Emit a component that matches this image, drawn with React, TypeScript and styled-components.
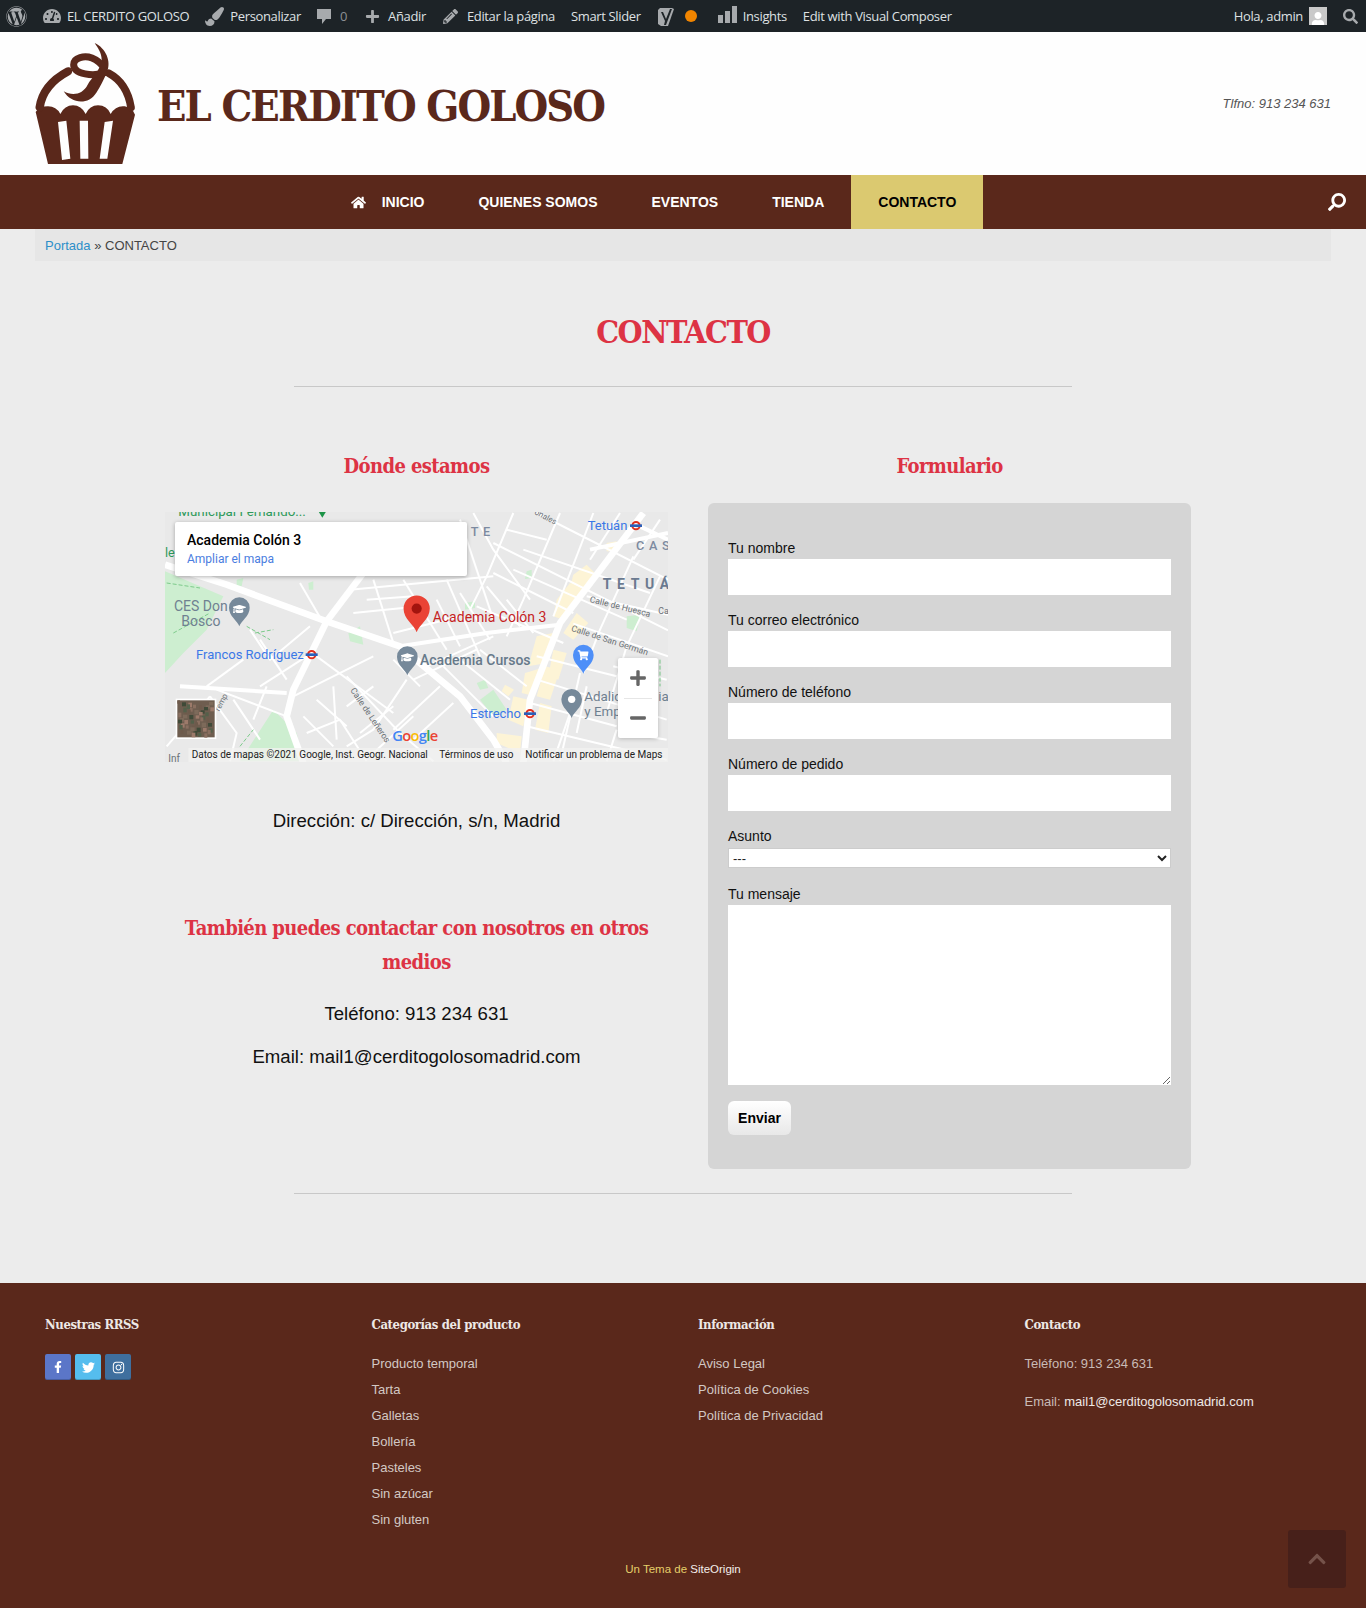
import type { ReactNode } from "react";
import styled, { createGlobalStyle } from "styled-components";
import {
  FaWordpress,
  FaTachometerAlt,
  FaPaintBrush,
  FaPlus,
  FaMinus,
  FaPencilAlt,
  FaSearch,
  FaHome,
  FaFacebookF,
  FaTwitter,
  FaInstagram,
  FaChevronUp,
  FaUser,
  FaShoppingCart,
  FaGraduationCap,
} from "react-icons/fa";

const SERIF = `"DejaVu Serif Condensed", "DejaVu Serif", serif`;
const SANS = `"Liberation Sans", Arial, sans-serif`;
const BROWN = "#5a281b";
const RED = "#dd3344";

const GlobalStyle = createGlobalStyle`
  html, body {
    margin: 0;
    padding: 0;
    background: #ececec;
    font-family: ${SANS};
  }
  * { box-sizing: border-box; }
`;

const Page = styled.div`
  position: relative;
  width: 1366px;
  height: 1608px;
  overflow: hidden;
`;

/* admin bar */
const AdminBar = styled.div`
  display: flex;
  align-items: center;
  justify-content: space-between;
  height: 32px;
  padding: 0 8px 0 6px;
  background: #1d2327;
  color: #dfe1e3;
  font-family: "Open Sans", sans-serif;
  font-size: 13px;
  letter-spacing: -0.35px;
`;
const AdminGroup = styled.div`
  display: flex;
  align-items: center;
  gap: 16px;
`;
const AdminItem = styled.span<{ $gap?: number; $left?: number }>`
  display: flex;
  align-items: center;
  gap: ${(p) => p.$gap ?? 6}px;
  margin-left: ${(p) => p.$left ?? 0}px;
  white-space: nowrap;
  svg {
    color: #a7aaad;
    display: block;
  }
`;
const CommentCount = styled.span`
  color: #8c8f94;
  margin-left: 2px;
`;
const StatusDot = styled.span`
  width: 12px;
  height: 12px;
  margin-left: -8px;
  border-radius: 50%;
  background: #f18500;
`;
const InsightBars = styled.span`
  display: flex;
  align-items: flex-end;
  gap: 2px;
  height: 17px;
  margin: 0 0 4px 5px;
`;
const Bar = styled.i<{ $h: number }>`
  display: block;
  width: 5px;
  height: ${(p) => p.$h}px;
  background: #a7aaad;
`;
const Avatar = styled.span`
  display: flex;
  align-items: flex-end;
  justify-content: center;
  width: 18px;
  height: 18px;
  background: #c9c9c9;
  overflow: hidden;
  svg {
    color: #fff;
    margin-bottom: -1px;
  }
`;

/* header */
const Header = styled.header`
  display: flex;
  align-items: center;
  justify-content: space-between;
  height: 143px;
  padding: 0 35px 2px;
  background: #fefefe;
`;
const Brand = styled.div`
  display: flex;
  align-items: center;
  gap: 21px;
`;
const LogoSvg = styled.svg`
  display: block;
  fill: ${BROWN};
`;
const BrandName = styled.div`
  margin-top: 6px;
  font-family: ${SERIF};
  font-size: 43px;
  font-weight: 700;
  color: ${BROWN};
  letter-spacing: -1.9px;
  white-space: nowrap;
`;
const Phone = styled.div`
  margin-top: 2px;
  font-size: 13px;
  font-style: italic;
  color: #555;
`;

/* nav */
const NavBar = styled.nav`
  display: flex;
  height: 54px;
  background: ${BROWN};
`;
const Menu = styled.ul`
  flex: 1;
  display: flex;
  justify-content: center;
  list-style: none;
  margin: 0;
  padding: 0;
`;
const MenuItem = styled.li<{ $active?: boolean }>`
  display: flex;
  align-items: center;
  gap: 16px;
  padding: 0 27px;
  font-size: 14px;
  font-weight: 700;
  color: ${(p) => (p.$active ? "#000" : "#fff")};
  background: ${(p) => (p.$active ? "#dbc970" : "transparent")};
`;
const NavSearch = styled.div`
  display: flex;
  align-items: center;
  width: 59px;
  padding-left: 21px;
  color: #fff;
  svg {
    transform: scaleX(-1);
  }
`;

/* main */
const Crumbs = styled.div`
  height: 32px;
  margin: 0 35px;
  padding-left: 10px;
  background: #e6e6e6;
  color: #444;
  font-size: 13px;
  line-height: 33px;
  a {
    color: #2d8fc9;
    text-decoration: none;
  }
`;
const PageTitle = styled.h1`
  margin: 51px 0 34px;
  font-family: ${SERIF};
  font-size: 32px;
  line-height: 40px;
  font-weight: 700;
  color: ${RED};
  text-align: center;
  letter-spacing: -1.5px;
`;
const Rule = styled.hr`
  width: 778px;
  height: 1px;
  margin: 0 auto;
  border: 0;
  background: #c8c8c8;
`;
const Columns = styled.div`
  display: grid;
  grid-template-columns: 503px 483px;
  column-gap: 40px;
  width: 1026px;
  margin: 61px 0 24px 165px;
`;
const SectionTitle = styled.h2<{ $top?: number }>`
  margin: ${(p) => p.$top ?? 0}px 0 -1px;
  padding-top: 1px;
  font-family: ${SERIF};
  font-size: 20px;
  line-height: 34px;
  font-weight: 700;
  color: ${RED};
  text-align: center;
  letter-spacing: -0.6px;
`;
const CenterText = styled.p<{ $top: number }>`
  margin: ${(p) => p.$top}px 0 0;
  font-size: 18.62px;
  line-height: 26px;
  color: #111;
  text-align: center;
`;

/* map */
const MapBox = styled.div`
  position: relative;
  width: 503px;
  height: 250px;
  margin-top: 30px;
  overflow: hidden;
  background: #e9e9e9;
  svg.base {
    display: block;
  }
`;
const InfoCard = styled.div`
  position: absolute;
  left: 10px;
  top: 10px;
  width: 292px;
  height: 54px;
  padding: 9px 12px;
  background: #fff;
  border-radius: 2px;
  box-shadow: 0 1px 4px rgba(0, 0, 0, 0.3);
  font-family: Roboto, sans-serif;
`;
const InfoName = styled.div`
  font-size: 14px;
  line-height: 18px;
  font-weight: 500;
  color: #000;
`;
const InfoLink = styled.div`
  margin-top: 1px;
  font-size: 12px;
  line-height: 19px;
  color: #4a7de0;
`;
const ZoomBox = styled.div`
  position: absolute;
  right: 10px;
  top: 146px;
  display: flex;
  flex-direction: column;
  width: 40px;
  height: 80px;
  background: #fff;
  border-radius: 2px;
  box-shadow: 0 1px 4px rgba(0, 0, 0, 0.2);
`;
const ZoomButton = styled.div`
  flex: 1;
  display: flex;
  align-items: center;
  justify-content: center;
  color: #666;
  & + & {
    position: relative;
  }
  & + &::before {
    content: "";
    position: absolute;
    top: 0;
    left: 6px;
    right: 6px;
    height: 1px;
    background: #e6e6e6;
  }
`;

/* form */
const FormPanel = styled.form`
  margin-top: 21px;
  padding: 35px 20px 34px;
  background: #d5d5d5;
  border-radius: 6px;
`;
const Label = styled.label`
  display: block;
  height: 21px;
  font-size: 14px;
  line-height: 20px;
  color: #111;
`;
const TextField = styled.input`
  display: block;
  width: 100%;
  height: 36px;
  margin-bottom: 15px;
  border: 0;
  background: #fff;
`;
const SelectField = styled.select`
  display: block;
  width: 100%;
  height: 20px;
  margin: 1px 0 16px;
  padding: 0;
  border: 1px solid #ccc;
  background: #fff;
  font-family: ${SANS};
  font-size: 13px;
  color: #222;
`;
const MessageField = styled.textarea`
  display: block;
  width: 100%;
  height: 180px;
  border: 0;
  background: #fff;
`;
const SendButton = styled.button`
  display: block;
  width: 63px;
  height: 34px;
  margin-top: 16px;
  padding: 0;
  border: 0;
  border-radius: 6px;
  background: linear-gradient(#ffffff, #e8e8e8);
  font-family: ${SANS};
  font-size: 14px;
  font-weight: 700;
  color: #000;
`;

/* footer */
const Footer = styled.footer`
  height: 325px;
  margin-top: 89px;
  padding: 32px 0 0 45px;
  background: ${BROWN};
  font-size: 13px;
  color: #d3c8c4;
`;
const FooterGrid = styled.div`
  display: grid;
  grid-template-columns: repeat(4, 326.5px);
  height: 244px;
`;
const FooterTitle = styled.h3`
  margin: 0 0 16px;
  font-family: ${SERIF};
  font-size: 13px;
  line-height: 20px;
  font-weight: 700;
  color: #eee8e5;
  letter-spacing: -0.4px;
`;
const FooterLinks = styled.ul`
  margin: 0;
  padding: 0;
  list-style: none;
`;
const FooterLink = styled.li`
  height: 26px;
  line-height: 26px;
`;
const ContactLine = styled.p`
  margin: 0 0 12px;
  line-height: 26px;
  color: #c9bbb6;
  strong {
    font-weight: 400;
    color: #efe9e6;
  }
`;
const Socials = styled.div`
  display: flex;
  gap: 4px;
  margin-top: 19px;
`;
const SocialIcon = styled.span<{ $bg: string }>`
  display: flex;
  align-items: center;
  justify-content: center;
  width: 26px;
  height: 26px;
  border-radius: 2px;
  background: ${(p) => p.$bg};
  box-shadow: inset 0 -1px 0 rgba(0, 0, 0, 0.2);
  color: #fff;
`;
const Credit = styled.div`
  margin-left: -45px;
  font-size: 11.5px;
  line-height: 20px;
  text-align: center;
  color: #e5cf6a;
  span {
    color: #f3eeea;
  }
`;
const ToTop = styled.div`
  position: absolute;
  left: 1288px;
  top: 1530px;
  display: flex;
  align-items: center;
  justify-content: center;
  width: 58px;
  height: 58px;
  border-radius: 3px;
  background: #47201a;
  color: #75524a;
`;

const THIN = [
  "M1130 40L1524 240", "M1000 130L1524 392", "M1240 372L1524 470", "M1280 290L1524 345",
  "M940 40L1000 150L1110 300", "M1300 40L1180 350", "M1200 40L1090 300L1040 410", "M1060 40L980 230L930 330",
  "M1420 170L1320 390L1270 520", "M1500 230L1400 440L1340 640", "M1000 220L1240 340", "M950 320L1210 430",
  "M900 60L1000 360", "M1040 90L1160 120", "M860 240L960 470", "M730 240L860 450", "M640 240L700 430",
  "M570 270L1000 230", "M420 250L490 370", "M700 400L900 350", "M800 500L1000 410", "M760 540L950 450",
  "M740 540L640 690L560 740", "M560 530L720 700L820 785", "M470 470L700 640", "M400 590L500 540L640 470",
  "M880 610L760 720", "M840 560L700 690", "M1130 540L1520 660", "M1110 610L1370 680", "M1100 680L1520 780",
  "M1130 470L1370 530", "M1260 520L1200 785", "M1370 690L1340 785", "M1230 640L1180 785",
  "M170 570L380 650", "M150 590L230 700L210 785", "M20 740L150 590", "M300 560L440 470", "M270 390L330 480L450 380",
  "M440 700L540 660L620 785", "M520 560L530 720",
  "M1380 40L1290 180", "M1500 60L1420 180", "M1090 150L1470 280", "M1060 210L1400 360",
  "M620 300L760 290", "M580 340L780 320", "M830 300L900 440", "M900 280L990 420", "M980 260L1080 380", "M1040 300L1120 400",
  "M780 560L700 480", "M850 500L1000 650", "M900 480L1050 600", "M960 450L1100 560",
  "M430 650L520 740", "M470 600L560 680", "M560 620L640 560", "M600 700L700 620", "M640 760L760 650",
  "M250 480L140 560", "M300 420L380 540", "M220 600L300 720", "M320 560L280 660",
  "M1360 500L1520 540", "M1280 560L1250 700", "M1400 700L1520 720",
];
const MEDIUM = ["M720 440L980 400L1200 375", "M60 560L380 580", "M1290 150L1524 100", "M1440 80L1524 120"];
const WIDE = [
  "M15 195L200 255L500 365L720 440L900 590L1000 720L1040 790",
  "M610 220L500 365L400 570L380 650L430 790",
  "M1450 40L1200 370L1110 600L1090 790",
];
const YELLOW = [
  "M1240 225L1280 195L1310 225L1260 290L1225 280Z", "M1190 300L1230 250L1260 270L1210 360L1180 350Z",
  "M1130 410L1180 400L1160 490L1105 500Z", "M1095 520L1145 505L1125 590L1085 580Z", "M1180 450L1220 460L1195 540L1165 530Z",
  "M1155 500L1200 510L1170 600L1130 590Z", "M1140 610L1175 620L1165 700L1125 690Z", "M1060 590L1105 600L1090 680L1045 660Z",
  "M1010 700L1085 710L1080 760L1010 730Z", "M1210 400L1250 340L1285 370L1240 420Z", "M1340 130L1370 125L1360 155L1340 155Z",
  "M1035 555L1062 570L1045 590L1025 575Z",
];
const GREEN = [
  "M15 215L190 290L140 390L70 460L15 520Z", "M240 785L340 630L410 700L430 785Z", "M565 400L600 380L610 435L570 425Z",
  "M960 600L1000 570L1040 630L1000 650Z", "M950 550L975 540L985 565L960 570Z", "M915 310L945 305L945 325L915 330Z",
  "M230 240L250 235L245 260L230 258Z", "M445 250L460 245L460 270L447 270Z", "M1400 350L1440 345L1430 395L1400 385Z",
  "M1100 215L1115 210L1115 235L1095 238Z",
];
const SATELLITE = ["#6e5a4b", "#8a6f60", "#54604a", "#9c7a6a", "#3f4a38", "#7d6a5a"];
const CATEGORIES = ["Producto temporal", "Tarta", "Galletas", "Bollería", "Pasteles", "Sin azúcar", "Sin gluten"];

const MetroIcon = ({ x, y }: { x: number; y: number }) => (
  <g transform={`translate(${x} ${y})`}>
    <circle r="11" fill="none" stroke="#e0301e" strokeWidth="6" />
    <rect x="-18" y="-4" width="36" height="8" fill="#2b5fb8" />
  </g>
);

const DropPin = ({
  x,
  y,
  color,
  scale = 1,
  children,
}: {
  x: number;
  y: number;
  color: string;
  scale?: number;
  children?: ReactNode;
}) => (
  <g transform={`translate(${x} ${y}) scale(${scale})`}>
    <path d="M0 48C-6 30-31 18-31 -8A31 31 0 1 1 31 -8C31 18 6 30 0 48Z" fill={color} />
    {children}
  </g>
);

function MapDrawing() {
  const labelFont = { fontFamily: "Roboto, sans-serif" };
  return (
    <svg className="base" width="503" height="250" viewBox="15 37 1509 750">
      <rect x="15" y="37" width="1509" height="750" fill="#e9e9e9" />
      {GREEN.map((d) => (
        <path key={d} d={d} fill="#cdeed0" />
      ))}
      {YELLOW.map((d) => (
        <path key={d} d={d} fill="#fdf4d6" />
      ))}
      <g stroke="#fff" fill="none" strokeLinejoin="round">
        {THIN.map((d) => (
          <path key={d} d={d} strokeWidth="6" />
        ))}
        {MEDIUM.map((d) => (
          <path key={d} d={d} strokeWidth="12" />
        ))}
        {WIDE.map((d) => (
          <path key={d} d={d} strokeWidth="20" />
        ))}
      </g>
      <path
        d="M20 250L120 265M40 400L150 340M260 380L330 420M285 400L340 390M240 740L280 690M1500 480V560"
        stroke="#7dcb8b"
        strokeWidth="3"
        strokeDasharray="12 6"
        fill="none"
      />
      <g {...labelFont}>
        <text x="55" y="48" fontSize="40" fill="#2e9a5a">Municipal Fernando...</text>
        <path d="M476 36h22l-11 18z" fill="#1e9448" />
        <text x="15" y="172" fontSize="38" fill="#2e9a5a">le</text>
        <text x="932" y="110" fontSize="38" fontWeight="500" letterSpacing="14" fill="#7c8aa0">TE</text>
        <text x="1283" y="92" fontSize="39" fill="#3b78e7">Tetuán</text>
        <MetroIcon x={1428} y={78} />
        <text x="1428" y="152" fontSize="38" fontWeight="500" letterSpacing="14" fill="#7c8aa0">CAS</text>
        <text x="1328" y="268" fontSize="42" fontWeight="700" letterSpacing="17" fill="#6b7a90">TETUÁN</text>
        <text x="42" y="335" fontSize="42" fill="#6f8090">CES Don</text>
        <text x="64" y="378" fontSize="42" fill="#6f8090">Bosco</text>
        <DropPin x={238} y={332} color="#76899a">
          <foreignObject x="-20" y="-24" width="40" height="40">
            <FaGraduationCap size={40} color="#fff" />
          </foreignObject>
        </DropPin>
        <text x="108" y="478" fontSize="39" fill="#3b78e7">Francos Rodríguez</text>
        <MetroIcon x={455} y={465} />
        <DropPin x={770} y={337} scale={1.27} color="#ea4335">
          <circle cy="-8" r="12" fill="#a3140e" />
        </DropPin>
        <text x="818" y="368" fontSize="42" fill="#c5221f">Academia Colón 3</text>
        <DropPin x={742} y={479} color="#76899a">
          <foreignObject x="-20" y="-26" width="40" height="40">
            <FaGraduationCap size={40} color="#fff" />
          </foreignObject>
        </DropPin>
        <text x="780" y="497" fontSize="42" fontWeight="500" fill="#66798a">Academia Cursos</text>
        <DropPin x={1270} y={474} color="#4e8ff8">
          <foreignObject x="-18" y="-24" width="36" height="36">
            <FaShoppingCart size={34} color="#fff" />
          </foreignObject>
        </DropPin>
        <DropPin x={1235} y={607} color="#76899a">
          <circle cy="-8" r="11" fill="#fff" />
        </DropPin>
        <text x="1273" y="605" fontSize="40" fill="#6f8090">Adalid</text>
        <text x="1273" y="648" fontSize="40" fill="#6f8090">y Emp</text>
        <text x="1495" y="605" fontSize="40" fill="#6f8090">ia</text>
        <text x="930" y="655" fontSize="39" fill="#3b78e7">Estrecho</text>
        <MetroIcon x={1110} y={642} />
        <text transform="translate(1288 307) rotate(14)" fontSize="26" fill="#6a7075">Calle de Huesca</text>
        <text x="1495" y="342" fontSize="26" fill="#6a7075">Ca</text>
        <text transform="translate(1232 393) rotate(18)" fontSize="26" fill="#6a7075">Calle de San Germán</text>
        <text transform="translate(570 572) rotate(56)" fontSize="26" fill="#6a7075">Calle de Leñeros</text>
        <text transform="translate(178 636) rotate(-62)" fontSize="24" fill="#6a7075">remp</text>
        <text transform="translate(1122 42) rotate(28)" fontSize="24" fill="#6a7075">onales</text>
      </g>
      <text x="697" y="724" fontSize="44" fontFamily="'Open Sans', sans-serif" fontWeight="600" letterSpacing="-2">
        <tspan fill="#4285f4">G</tspan>
        <tspan fill="#ea4335">o</tspan>
        <tspan fill="#fbbc05">o</tspan>
        <tspan fill="#4285f4">g</tspan>
        <tspan fill="#34a853">l</tspan>
        <tspan fill="#ea4335">e</tspan>
      </text>
      <rect x="47" y="597" width="122" height="121" fill="#fff" />
      <rect x="52" y="602" width="112" height="111" fill="#6e5d4f" />
      {Array.from({ length: 48 }).map((_, i) => (
        <rect
          key={i}
          x={52 + ((i * 37) % 100)}
          y={602 + ((i * 23) % 100)}
          width={8 + (i % 6)}
          height={10 + (i % 5)}
          fill={SATELLITE[i % SATELLITE.length]}
        />
      ))}
      <text x="25" y="786" fontSize="30" {...labelFont} fill="#6a7075">Inf</text>
      <rect x="85" y="745" width="1439" height="42" fill="#f2f2f0" opacity="0.75" />
      <g {...labelFont} fontSize="30" fill="#222">
        <text x="95" y="774">Datos de mapas ©2021 Google, Inst. Geogr. Nacional</text>
        <text x="838" y="774">Términos de uso</text>
        <text x="1096" y="774">Notificar un problema de Maps</text>
      </g>
    </svg>
  );
}

function Cupcake() {
  return (
    <LogoSvg width="101" height="122" viewBox="16 22 303 366">
      <path d="M18 232Q28 215 55 215Q80 215 92 238Q105 212 130 212Q155 212 168 238Q180 212 205 212Q232 212 243 238Q258 212 285 215Q308 218 316 240L278 388L55 388Z" />
      <path d="M85 262L110 258L122 372L97 376ZM150 258L175 258L176 372L152 372ZM225 262L250 258L233 372L210 372Z" fill="#fefefe" />
      <path d="M30 218Q40 150 115 110" fill="none" stroke={BROWN} strokeWidth="25" strokeLinecap="round" />
      <path d="M238 116Q292 145 304 218" fill="none" stroke={BROWN} strokeWidth="23" strokeLinecap="round" />
      <path d="M195 25C228 40 246 80 232 112C222 137 212 155 200 174C176 212 125 208 102 170C130 185 160 178 174 150C185 128 212 110 216 75C216 55 205 40 195 25Z" />
      <path d="M232 112C190 128 132 118 132 90C132 68 165 62 187 70C207 78 217 90 225 102" fill="none" stroke={BROWN} strokeWidth="21" />
    </LogoSvg>
  );
}

function App() {
  return (
    <Page>
      <GlobalStyle />
      <AdminBar>
        <AdminGroup>
          <AdminItem>
            <FaWordpress size={21} />
          </AdminItem>
          <AdminItem>
            <FaTachometerAlt size={18} />
            EL CERDITO GOLOSO
          </AdminItem>
          <AdminItem>
            <FaPaintBrush size={19} />
            Personalizar
          </AdminItem>
          <AdminItem $left={-1}>
            <svg width="16" height="17" viewBox="0 0 16 17">
              <path d="M1 1h14v10h-5l-4 5v-5H1z" fill="currentColor" />
            </svg>
            <CommentCount>0</CommentCount>
          </AdminItem>
          <AdminItem $gap={8} $left={2}>
            <FaPlus size={15} />
            Añadir
          </AdminItem>
          <AdminItem $gap={9} $left={1}>
            <FaPencilAlt size={15} />
            Editar la página
          </AdminItem>
          <AdminItem>Smart Slider</AdminItem>
          <AdminItem>
            <svg width="20" height="22" viewBox="0 0 20 22">
              <path d="M3 3h12l2 1-6 17H4l-3-2V5z" fill="#a7aaad" />
              <path d="M6 7l3 7 4-10h2l-6 16H7l1-4-4-9z" fill="#1d2327" />
            </svg>
          </AdminItem>
          <StatusDot />
          <AdminItem>
            <InsightBars>
              <Bar $h={8} />
              <Bar $h={12} />
              <Bar $h={17} />
            </InsightBars>
            Insights
          </AdminItem>
          <AdminItem>Edit with Visual Composer</AdminItem>
        </AdminGroup>
        <AdminGroup>
          <AdminItem>
            Hola, admin
            <Avatar>
              <FaUser size={14} />
            </Avatar>
          </AdminItem>
          <AdminItem>
            <FaSearch size={15} />
          </AdminItem>
        </AdminGroup>
      </AdminBar>

      <Header>
        <Brand>
          <Cupcake />
          <BrandName>EL CERDITO GOLOSO</BrandName>
        </Brand>
        <Phone>Tlfno: 913 234 631</Phone>
      </Header>

      <NavBar>
        <Menu>
          <MenuItem>
            <FaHome size={15} />
            INICIO
          </MenuItem>
          <MenuItem>QUIENES SOMOS</MenuItem>
          <MenuItem>EVENTOS</MenuItem>
          <MenuItem>TIENDA</MenuItem>
          <MenuItem $active>CONTACTO</MenuItem>
        </Menu>
        <NavSearch>
          <FaSearch size={18} />
        </NavSearch>
      </NavBar>

      <Crumbs>
        <a href="#">Portada</a> » CONTACTO
      </Crumbs>

      <PageTitle>CONTACTO</PageTitle>
      <Rule />

      <Columns>
        <div>
          <SectionTitle>Dónde estamos</SectionTitle>
          <MapBox>
            <MapDrawing />
            <InfoCard>
              <InfoName>Academia Colón 3</InfoName>
              <InfoLink>Ampliar el mapa</InfoLink>
            </InfoCard>
            <ZoomBox>
              <ZoomButton>
                <FaPlus size={18} />
              </ZoomButton>
              <ZoomButton>
                <FaMinus size={18} />
              </ZoomButton>
            </ZoomBox>
          </MapBox>
          <CenterText $top={46}>Dirección: c/ Dirección, s/n, Madrid</CenterText>
          <SectionTitle $top={76}>También puedes contactar con nosotros en otros medios</SectionTitle>
          <CenterText $top={23}>Teléfono: 913 234 631</CenterText>
          <CenterText $top={17}>Email: mail1@cerditogolosomadrid.com</CenterText>
        </div>
        <div>
          <SectionTitle>Formulario</SectionTitle>
          <FormPanel>
            <Label>Tu nombre</Label>
            <TextField type="text" />
            <Label>Tu correo electrónico</Label>
            <TextField type="email" />
            <Label>Número de teléfono</Label>
            <TextField type="tel" />
            <Label>Número de pedido</Label>
            <TextField type="text" />
            <Label>Asunto</Label>
            <SelectField>
              <option>---</option>
            </SelectField>
            <Label>Tu mensaje</Label>
            <MessageField />
            <SendButton type="button">Enviar</SendButton>
          </FormPanel>
        </div>
      </Columns>
      <Rule />

      <Footer>
        <FooterGrid>
          <div>
            <FooterTitle>Nuestras RRSS</FooterTitle>
            <Socials>
              <SocialIcon $bg="#5b76c8">
                <FaFacebookF size={12} />
              </SocialIcon>
              <SocialIcon $bg="#55bdee">
                <FaTwitter size={13} />
              </SocialIcon>
              <SocialIcon $bg="#3f6f9e">
                <FaInstagram size={13} />
              </SocialIcon>
            </Socials>
          </div>
          <div>
            <FooterTitle>Categorías del producto</FooterTitle>
            <FooterLinks>
              {CATEGORIES.map((name) => (
                <FooterLink key={name}>{name}</FooterLink>
              ))}
            </FooterLinks>
          </div>
          <div>
            <FooterTitle>Información</FooterTitle>
            <FooterLinks>
              <FooterLink>Aviso Legal</FooterLink>
              <FooterLink>Política de Cookies</FooterLink>
              <FooterLink>Política de Privacidad</FooterLink>
            </FooterLinks>
          </div>
          <div>
            <FooterTitle>Contacto</FooterTitle>
            <ContactLine>Teléfono: 913 234 631</ContactLine>
            <ContactLine>
              Email: <strong>mail1@cerditogolosomadrid.com</strong>
            </ContactLine>
          </div>
        </FooterGrid>
        <Credit>
          Un Tema de <span>SiteOrigin</span>
        </Credit>
      </Footer>

      <ToTop>
        <FaChevronUp size={20} />
      </ToTop>
    </Page>
  );
}

export default App;
